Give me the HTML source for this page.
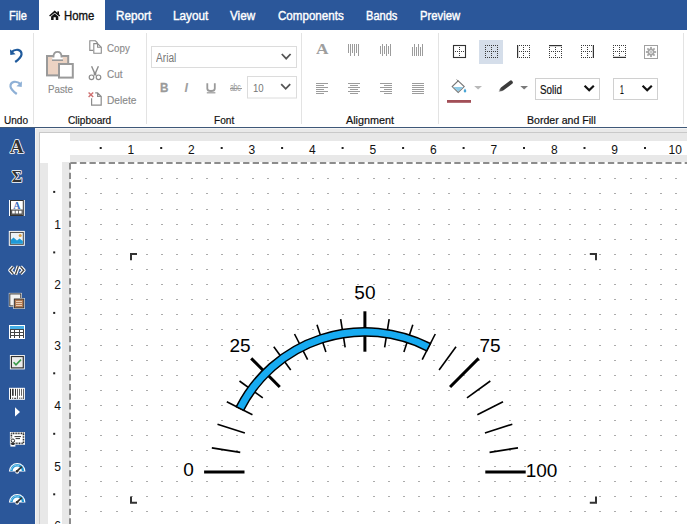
<!DOCTYPE html><html><head><meta charset="utf-8"><style>
*{margin:0;padding:0;box-sizing:border-box}
html,body{width:687px;height:524px;overflow:hidden;background:#fff;font-family:"Liberation Sans",sans-serif}
.a{position:absolute}
.t{position:absolute;white-space:nowrap;line-height:1.149;transform-origin:0 0}
svg{position:absolute;overflow:visible}
</style></head><body><div class="a" style="left:0;top:0;width:687px;height:30px;background:#2b579a"></div>
<div class="a" style="left:38.5px;top:0;width:66px;height:30px;background:#fff"></div>
<div class="t" style="left:9.10px;top:9.09px;font-size:12.5px;color:#fff;transform:scaleX(0.884);-webkit-text-stroke:0.4px #fff">File</div>
<div class="t" style="left:116.10px;top:9.09px;font-size:12.5px;color:#fff;transform:scaleX(0.939);-webkit-text-stroke:0.4px #fff">Report</div>
<div class="t" style="left:172.90px;top:9.09px;font-size:12.5px;color:#fff;transform:scaleX(0.939);-webkit-text-stroke:0.4px #fff">Layout</div>
<div class="t" style="left:229.90px;top:9.09px;font-size:12.5px;color:#fff;transform:scaleX(0.937);-webkit-text-stroke:0.4px #fff">View</div>
<div class="t" style="left:277.70px;top:9.09px;font-size:12.5px;color:#fff;transform:scaleX(0.927);-webkit-text-stroke:0.4px #fff">Components</div>
<div class="t" style="left:365.80px;top:9.09px;font-size:12.5px;color:#fff;transform:scaleX(0.885);-webkit-text-stroke:0.4px #fff">Bands</div>
<div class="t" style="left:419.60px;top:9.09px;font-size:12.5px;color:#fff;transform:scaleX(0.903);-webkit-text-stroke:0.4px #fff">Preview</div>
<div class="t" style="left:63.60px;top:8.89px;font-size:12.5px;color:#111;transform:scaleX(0.908);-webkit-text-stroke:0.35px #111">Home</div>
<svg style="left:0;top:0" width="687" height="30"><path d="M49.6 16 L54.7 11.6 L59.8 16" fill="none" stroke="#111" stroke-width="1.5"/><rect x="57.3" y="11.4" width="1.7" height="3" fill="#111"/><path d="M51.1 16.6 L54.7 13.6 L58.3 16.6 V19.9 H55.8 V17.3 H53.6 V19.9 H51.1 Z" fill="#111"/></svg>
<div class="a" style="left:0;top:127px;width:687px;height:1px;background:#3f5878"></div>
<div class="a" style="left:33px;top:33px;width:1px;height:91px;background:#e3e3e3"></div>
<div class="a" style="left:146px;top:33px;width:1px;height:91px;background:#e3e3e3"></div>
<div class="a" style="left:300.5px;top:33px;width:1px;height:91px;background:#e3e3e3"></div>
<div class="a" style="left:438px;top:33px;width:1px;height:91px;background:#e3e3e3"></div>
<div class="a" style="left:683px;top:33px;width:1px;height:91px;background:#e3e3e3"></div>
<div class="t" style="left:4.20px;top:114.17px;font-size:11px;color:#111;transform:scaleX(0.913);-webkit-text-stroke:0.2px #111">Undo</div>
<div class="t" style="left:68.40px;top:114.17px;font-size:11px;color:#111;transform:scaleX(0.918);-webkit-text-stroke:0.2px #111">Clipboard</div>
<div class="t" style="left:214.00px;top:114.17px;font-size:11px;color:#111;transform:scaleX(0.918);-webkit-text-stroke:0.2px #111">Font</div>
<div class="t" style="left:346.00px;top:114.17px;font-size:11px;color:#111;transform:scaleX(0.981);-webkit-text-stroke:0.2px #111">Alignment</div>
<div class="t" style="left:527.00px;top:114.17px;font-size:11px;color:#111;transform:scaleX(0.961);-webkit-text-stroke:0.2px #111">Border and Fill</div>
<svg style="left:0;top:0" width="687" height="130"><path d="M11.2 52.2 Q14.5 49.3 18 49.8 Q21.8 50.6 21.5 54.6 Q21.2 57.5 15.2 62" fill="none" stroke="#1f5a9c" stroke-width="2.2" stroke-linecap="butt"/><path d="M10 49.3 L10.3 55 L15.6 54.2 Z" fill="#1f5a9c"/><path d="M20.8 84.2 Q17.5 81.3 14 81.8 Q10.2 82.6 10.5 86.6 Q10.8 89.5 16.8 94" fill="none" stroke="#8eb0d6" stroke-width="2.2"/><path d="M22 81.3 L21.7 87 L16.4 86.2 Z" fill="#8eb0d6"/><rect x="47" y="56" width="21.2" height="19.4" fill="#ecd3c3" stroke="#9a9a9a" stroke-width="2"/><path d="M53.5 60 L53.5 56.5 Q53.5 51.8 57.5 51.8 Q61.5 51.8 61.5 56.5 L61.5 60 Z" fill="#fff" stroke="#9a9a9a" stroke-width="1.8"/><rect x="52.2" y="57.5" width="10.6" height="2.6" fill="#fff"/><path d="M52 60.2 H63" stroke="#9a9a9a" stroke-width="1.6"/><rect x="59" y="64" width="13.8" height="13.6" fill="#fff" stroke="#9a9a9a" stroke-width="2"/><path d="M93.2 50.4 H89.8 V40.8 H95.4 L97.6 43" fill="none" stroke="#8c8c8c" stroke-width="1.1"/><path d="M93.8 53.3 V43.6 H97.6 L101.3 47.3 V53.3 Z M97.6 43.6 V47.3 H101.3" fill="#fff" stroke="#8c8c8c" stroke-width="1.1"/><path d="M91.6 66.3 L94.4 72.6 V75.6 M98.4 66.3 L95.6 72.6 V75.6 M93.6 72.9 H96.4" fill="none" stroke="#8c8c8c" stroke-width="1.4"/><circle cx="91.5" cy="77.3" r="2.3" fill="none" stroke="#8c8c8c" stroke-width="1.2"/><circle cx="98.5" cy="77.3" r="2.3" fill="none" stroke="#8c8c8c" stroke-width="1.2"/><path d="M95.2 92.8 H97.6 L101.2 96.4 V105.2 H91.6 V98.2 M97.6 92.8 V96.4 H101.2" fill="none" stroke="#8c8c8c" stroke-width="1.2"/><path d="M88.6 92.4 L93.2 97 M93.2 92.4 L88.6 97" stroke="#cf7070" stroke-width="1.4"/><rect x="151.5" y="46.5" width="145" height="21" fill="#fff" stroke="#dcdcdc"/><path d="M281.8 54 L286.2 58.6 L290.6 54" fill="none" stroke="#555" stroke-width="1.8"/><rect x="247.5" y="76.5" width="49" height="21.5" fill="#fff" stroke="#dcdcdc"/><path d="M281.2 84.2 L285.7 88.8 L290.2 84.2" fill="none" stroke="#555" stroke-width="1.8"/><path d="M207.3 83.2 V88.4 Q207.3 91 211 91 Q214.8 91 214.8 88.4 V83.2" fill="none" stroke="#9a9a9a" stroke-width="1.8"/><rect x="206.8" y="92.2" width="8.6" height="1.2" fill="#9a9a9a"/><path d="M348.5 44.0V53.0M350.5 44.0V56.0M352.5 44.0V53.0M354.5 44.0V56.0M356.5 44.0V53.0M358.5 44.0V56.0" stroke="#9c9c9c" stroke-width="1"/><path d="M380.5 46.0V54.0M382.5 44.0V56.0M384.5 46.0V54.0M386.5 44.0V56.0M388.5 46.0V54.0M390.5 44.0V56.0" stroke="#9c9c9c" stroke-width="1"/><path d="M412.5 47.0V56.0M414.5 44.0V56.0M416.5 47.0V56.0M418.5 44.0V56.0M420.5 47.0V56.0M422.5 44.0V56.0" stroke="#9c9c9c" stroke-width="1"/><path d="M316.0 83.5H328.0M316.0 85.5H324.0M316.0 87.5H328.0M316.0 89.5H324.0M316.0 91.5H328.0M316.0 93.5H324.0" stroke="#9c9c9c" stroke-width="1"/><path d="M348.0 83.5H360.0M350.0 85.5H358.0M348.0 87.5H360.0M350.0 89.5H358.0M348.0 91.5H360.0M350.0 93.5H358.0" stroke="#9c9c9c" stroke-width="1"/><path d="M380.0 83.5H392.0M384.0 85.5H392.0M380.0 87.5H392.0M384.0 89.5H392.0M380.0 91.5H392.0M384.0 93.5H392.0" stroke="#9c9c9c" stroke-width="1"/><path d="M412.0 83.5H424.0M412.0 85.5H424.0M412.0 87.5H424.0M412.0 89.5H424.0M412.0 91.5H424.0M412.0 93.5H424.0" stroke="#9c9c9c" stroke-width="1"/><rect x="479" y="40" width="24" height="24" fill="#d5deea"/><rect x="453.5" y="45.5" width="12" height="12" fill="none" stroke="#333" stroke-width="1.1"/><path d="M455 51.5h1M457 51.5h1M459 47.5h1M459 49.5h1M459 51.5h1M459 53.5h1M459 55.5h1M461 51.5h1M463 51.5h1" stroke="#3a3a3a" stroke-width="1"/><path d="M485 45.5h1M485 47.5h1M485 49.5h1M485 51.5h1M485 53.5h1M485 55.5h1M485 57.5h1M487 45.5h1M487 51.5h1M487 57.5h1M489 45.5h1M489 51.5h1M489 57.5h1M491 45.5h1M491 47.5h1M491 49.5h1M491 51.5h1M491 53.5h1M491 55.5h1M491 57.5h1M493 45.5h1M493 51.5h1M493 57.5h1M495 45.5h1M495 51.5h1M495 57.5h1M497 45.5h1M497 47.5h1M497 49.5h1M497 51.5h1M497 53.5h1M497 55.5h1M497 57.5h1" stroke="#3a3a3a" stroke-width="1"/><rect x="517" y="45" width="1.2" height="13" fill="#333"/><path d="M519 45.5h1M519 51.5h1M519 57.5h1M521 45.5h1M521 51.5h1M521 57.5h1M523 45.5h1M523 47.5h1M523 49.5h1M523 51.5h1M523 53.5h1M523 55.5h1M523 57.5h1M525 45.5h1M525 51.5h1M525 57.5h1M527 45.5h1M527 51.5h1M527 57.5h1M529 45.5h1M529 47.5h1M529 49.5h1M529 51.5h1M529 53.5h1M529 55.5h1M529 57.5h1" stroke="#3a3a3a" stroke-width="1"/><rect x="549" y="45" width="13" height="1.2" fill="#333"/><path d="M549 47.5h1M549 49.5h1M549 51.5h1M549 53.5h1M549 55.5h1M549 57.5h1M551 51.5h1M551 57.5h1M553 51.5h1M553 57.5h1M555 47.5h1M555 49.5h1M555 51.5h1M555 53.5h1M555 55.5h1M555 57.5h1M557 51.5h1M557 57.5h1M559 51.5h1M559 57.5h1M561 47.5h1M561 49.5h1M561 51.5h1M561 53.5h1M561 55.5h1M561 57.5h1" stroke="#3a3a3a" stroke-width="1"/><rect x="592.8" y="45" width="1.2" height="13" fill="#333"/><path d="M581 45.5h1M581 47.5h1M581 49.5h1M581 51.5h1M581 53.5h1M581 55.5h1M581 57.5h1M583 45.5h1M583 51.5h1M583 57.5h1M585 45.5h1M585 51.5h1M585 57.5h1M587 45.5h1M587 47.5h1M587 49.5h1M587 51.5h1M587 53.5h1M587 55.5h1M587 57.5h1M589 45.5h1M589 51.5h1M589 57.5h1M591 45.5h1M591 51.5h1M591 57.5h1" stroke="#3a3a3a" stroke-width="1"/><rect x="613" y="56.8" width="13" height="1.2" fill="#333"/><path d="M613 45.5h1M613 47.5h1M613 49.5h1M613 51.5h1M613 53.5h1M613 55.5h1M615 45.5h1M615 51.5h1M617 45.5h1M617 51.5h1M619 45.5h1M619 47.5h1M619 49.5h1M619 51.5h1M619 53.5h1M619 55.5h1M621 45.5h1M621 51.5h1M623 45.5h1M623 51.5h1M625 45.5h1M625 47.5h1M625 49.5h1M625 51.5h1M625 53.5h1M625 55.5h1" stroke="#3a3a3a" stroke-width="1"/><rect x="644.5" y="45.5" width="13" height="13" fill="#fff" stroke="#a0a0a0" stroke-width="1"/><rect x="650.1" y="46.9" width="1.8" height="2.4" fill="#a6a6a6" transform="rotate(0 651 52)"/><rect x="650.1" y="46.9" width="1.8" height="2.4" fill="#a6a6a6" transform="rotate(45 651 52)"/><rect x="650.1" y="46.9" width="1.8" height="2.4" fill="#a6a6a6" transform="rotate(90 651 52)"/><rect x="650.1" y="46.9" width="1.8" height="2.4" fill="#a6a6a6" transform="rotate(135 651 52)"/><rect x="650.1" y="46.9" width="1.8" height="2.4" fill="#a6a6a6" transform="rotate(180 651 52)"/><rect x="650.1" y="46.9" width="1.8" height="2.4" fill="#a6a6a6" transform="rotate(225 651 52)"/><rect x="650.1" y="46.9" width="1.8" height="2.4" fill="#a6a6a6" transform="rotate(270 651 52)"/><rect x="650.1" y="46.9" width="1.8" height="2.4" fill="#a6a6a6" transform="rotate(315 651 52)"/><circle cx="651" cy="52" r="2.6" fill="none" stroke="#a6a6a6" stroke-width="1.6"/><rect x="650.2" y="51.2" width="1.6" height="1.6" fill="#a6a6a6"/><path d="M458.2 80.8 L464.2 86.6 L458.2 92.4 L452.2 86.6 Z" fill="#fff" stroke="#777" stroke-width="1.1"/><path d="M453.2 86.9 L463.2 86.9 L458.2 91.6 Z" fill="#8fcbe6"/><path d="M465 88.4 Q466.6 90.4 466.3 91.3 Q465.9 92.5 465 92.5 Q464.1 92.5 463.7 91.3 Q463.4 90.4 465 88.4Z" fill="#49a6d6"/><path d="M456.6 79.6 L458.6 81.4" stroke="#777" stroke-width="1"/><rect x="447" y="100" width="24" height="2.8" fill="#a24f57"/><path d="M474.2 86 H482 L478.1 89.6 Z" fill="#b9b9b9"/><g transform="translate(498.6 91.6) rotate(-37)"><rect x="3.2" y="-1.9" width="14" height="3.8" rx="1.6" fill="#3c3c3c"/><path d="M0.2 0 L3.6 -1.9 L3.6 1.9 Z" fill="#555"/><path d="M0.2 0 L1.6 -0.8 L1.6 0.8 Z" fill="#ccc"/></g><path d="M520.3 86 H528 L524.15 89.6 Z" fill="#7a7a7a"/><rect x="535.5" y="78.5" width="64" height="21" fill="#fff" stroke="#d0d0d0"/><path d="M584.6 85.8 L589.2 90.2 L593.8 85.8" fill="none" stroke="#111" stroke-width="2.2"/><rect x="613.5" y="78.5" width="44" height="21" fill="#fff" stroke="#d0d0d0"/><path d="M642.6 85.8 L647.2 90.2 L651.8 85.8" fill="none" stroke="#111" stroke-width="2.2"/></svg>
<div class="t" style="left:48.00px;top:82.87px;font-size:11px;color:#8a8a8a;transform:scaleX(0.888);-webkit-text-stroke:0.15px #8a8a8a">Paste</div>
<div class="t" style="left:107.20px;top:42.17px;font-size:11px;color:#8a8a8a;transform:scaleX(0.890);-webkit-text-stroke:0.15px #8a8a8a">Copy</div>
<div class="t" style="left:107.00px;top:67.87px;font-size:11px;color:#8a8a8a;transform:scaleX(0.909);-webkit-text-stroke:0.15px #8a8a8a">Cut</div>
<div class="t" style="left:107.20px;top:93.67px;font-size:11px;color:#8a8a8a;transform:scaleX(0.925);-webkit-text-stroke:0.15px #8a8a8a">Delete</div>
<div class="t" style="left:156.20px;top:52.15px;font-size:12px;color:#777;transform:scaleX(0.846);">Arial</div>
<div class="t" style="left:252.70px;top:82.01px;font-size:11.5px;color:#777;transform:scaleX(0.838);">10</div>
<div class="t" style="left:540.20px;top:83.29px;font-size:12.5px;color:#111;transform:scaleX(0.786);-webkit-text-stroke:0.2px #111">Solid</div>
<div class="t" style="left:619.60px;top:83.75px;font-size:12px;color:#111;transform:scaleX(0.565);-webkit-text-stroke:0.2px #111">1</div>
<div class="t" style="left:160.00px;top:80.83px;font-size:13px;color:#9a9a9a;transform:scaleX(0.896);font-weight:bold;-webkit-text-stroke:0.3px #9a9a9a">B</div>
<div class="t" style="left:184.50px;top:80.69px;font-size:12.5px;color:#a0a0a0;font-style:italic;font-weight:bold">I</div>
<div class="t" style="left:229.70px;top:81.59px;font-size:10px;color:#9a9a9a;transform:scaleX(0.714);letter-spacing:-0.5px">abc</div>
<div class="a" style="left:229.5px;top:87.6px;width:12px;height:1px;background:#9a9a9a"></div>
<div class="t" style="left:316.30px;top:41.05px;font-size:14.5px;color:#9e9e9e;transform:scaleX(1.194);font-family:'Liberation Serif';font-weight:bold">A</div>
<div class="a" style="left:35px;top:128px;width:652px;height:396px;background:#e9e9e9"></div>
<div class="a" style="left:35px;top:128px;width:652px;height:1px;background:#f4f4f4"></div>
<div class="a" style="left:35px;top:128px;width:1px;height:396px;background:#f4f4f4"></div>
<div class="a" style="left:39px;top:132px;width:648px;height:392px;background:#c9c9c9"></div>
<div class="a" style="left:40px;top:133px;width:647px;height:391px;background:#fff"></div>
<div class="a" style="left:70px;top:133px;width:617px;height:8px;background:#e8e8e8"></div>
<div class="a" style="left:70px;top:155px;width:617px;height:7px;background:#e8e8e8"></div>
<div class="a" style="left:40px;top:163px;width:8px;height:361px;background:#e8e8e8"></div>
<div class="a" style="left:62px;top:162px;width:7.5px;height:362px;background:#e8e8e8"></div>
<div class="t" style="left:127.61px;top:144.15px;font-size:12px;color:#111;">1</div>
<div class="t" style="left:188.08px;top:144.15px;font-size:12px;color:#111;">2</div>
<div class="t" style="left:248.55px;top:144.15px;font-size:12px;color:#111;">3</div>
<div class="t" style="left:309.02px;top:144.15px;font-size:12px;color:#111;">4</div>
<div class="t" style="left:369.49px;top:144.15px;font-size:12px;color:#111;">5</div>
<div class="t" style="left:429.96px;top:144.15px;font-size:12px;color:#111;">6</div>
<div class="t" style="left:490.43px;top:144.15px;font-size:12px;color:#111;">7</div>
<div class="t" style="left:550.90px;top:144.15px;font-size:12px;color:#111;">8</div>
<div class="t" style="left:611.37px;top:144.15px;font-size:12px;color:#111;">9</div>
<div class="t" style="left:668.54px;top:144.15px;font-size:12px;color:#111;">10</div>
<div class="t" style="left:54.14px;top:218.82px;font-size:12px;color:#111;">1</div>
<div class="t" style="left:54.14px;top:279.29px;font-size:12px;color:#111;">2</div>
<div class="t" style="left:54.14px;top:339.76px;font-size:12px;color:#111;">3</div>
<div class="t" style="left:54.14px;top:400.23px;font-size:12px;color:#111;">4</div>
<div class="t" style="left:54.14px;top:460.70px;font-size:12px;color:#111;">5</div>
<div class="t" style="left:54.20px;top:519.95px;font-size:12px;color:#111;">6</div>
<svg style="left:0;top:0" width="687" height="524"><rect x="99.7" y="147" width="2" height="2" fill="#222"/><rect x="160.2" y="147" width="2" height="2" fill="#222"/><rect x="220.7" y="147" width="2" height="2" fill="#222"/><rect x="281.1" y="147" width="2" height="2" fill="#222"/><rect x="341.6" y="147" width="2" height="2" fill="#222"/><rect x="402.1" y="147" width="2" height="2" fill="#222"/><rect x="462.6" y="147" width="2" height="2" fill="#222"/><rect x="523.0" y="147" width="2" height="2" fill="#222"/><rect x="583.5" y="147" width="2" height="2" fill="#222"/><rect x="644.0" y="147" width="2" height="2" fill="#222"/><rect x="704.4" y="147" width="2" height="2" fill="#222"/><rect x="53.2" y="190.9" width="2" height="2" fill="#222"/><rect x="53.2" y="251.4" width="2" height="2" fill="#222"/><rect x="53.2" y="311.9" width="2" height="2" fill="#222"/><rect x="53.2" y="372.3" width="2" height="2" fill="#222"/><rect x="53.2" y="432.8" width="2" height="2" fill="#222"/><rect x="53.2" y="493.3" width="2" height="2" fill="#222"/><path d="M85 178.5h2M85 193.5h2M85 209.5h2M85 224.5h2M85 239.5h2M85 254.5h2M85 269.5h2M85 284.5h2M85 299.5h2M85 314.5h2M85 329.5h2M85 345.5h2M85 360.5h2M85 375.5h2M85 390.5h2M85 405.5h2M85 420.5h2M85 435.5h2M85 450.5h2M85 466.5h2M85 481.5h2M85 496.5h2M85 511.5h2M100 178.5h2M100 193.5h2M100 209.5h2M100 224.5h2M100 239.5h2M100 254.5h2M100 269.5h2M100 284.5h2M100 299.5h2M100 314.5h2M100 329.5h2M100 345.5h2M100 360.5h2M100 375.5h2M100 390.5h2M100 405.5h2M100 420.5h2M100 435.5h2M100 450.5h2M100 466.5h2M100 481.5h2M100 496.5h2M100 511.5h2M116 178.5h2M116 193.5h2M116 209.5h2M116 224.5h2M116 239.5h2M116 254.5h2M116 269.5h2M116 284.5h2M116 299.5h2M116 314.5h2M116 329.5h2M116 345.5h2M116 360.5h2M116 375.5h2M116 390.5h2M116 405.5h2M116 420.5h2M116 435.5h2M116 450.5h2M116 466.5h2M116 481.5h2M116 496.5h2M116 511.5h2M131 178.5h2M131 193.5h2M131 209.5h2M131 224.5h2M131 239.5h2M131 254.5h2M131 269.5h2M131 284.5h2M131 299.5h2M131 314.5h2M131 329.5h2M131 345.5h2M131 360.5h2M131 375.5h2M131 390.5h2M131 405.5h2M131 420.5h2M131 435.5h2M131 450.5h2M131 466.5h2M131 481.5h2M131 496.5h2M131 511.5h2M146 178.5h2M146 193.5h2M146 209.5h2M146 224.5h2M146 239.5h2M146 254.5h2M146 269.5h2M146 284.5h2M146 299.5h2M146 314.5h2M146 329.5h2M146 345.5h2M146 360.5h2M146 375.5h2M146 390.5h2M146 405.5h2M146 420.5h2M146 435.5h2M146 450.5h2M146 466.5h2M146 481.5h2M146 496.5h2M146 511.5h2M161 178.5h2M161 193.5h2M161 209.5h2M161 224.5h2M161 239.5h2M161 254.5h2M161 269.5h2M161 284.5h2M161 299.5h2M161 314.5h2M161 329.5h2M161 345.5h2M161 360.5h2M161 375.5h2M161 390.5h2M161 405.5h2M161 420.5h2M161 435.5h2M161 450.5h2M161 466.5h2M161 481.5h2M161 496.5h2M161 511.5h2M176 178.5h2M176 193.5h2M176 209.5h2M176 224.5h2M176 239.5h2M176 254.5h2M176 269.5h2M176 284.5h2M176 299.5h2M176 314.5h2M176 329.5h2M176 345.5h2M176 360.5h2M176 375.5h2M176 390.5h2M176 405.5h2M176 420.5h2M176 435.5h2M176 450.5h2M176 466.5h2M176 481.5h2M176 496.5h2M176 511.5h2M191 178.5h2M191 193.5h2M191 209.5h2M191 224.5h2M191 239.5h2M191 254.5h2M191 269.5h2M191 284.5h2M191 299.5h2M191 314.5h2M191 329.5h2M191 345.5h2M191 360.5h2M191 375.5h2M191 390.5h2M191 405.5h2M191 420.5h2M191 435.5h2M191 450.5h2M191 466.5h2M191 481.5h2M191 496.5h2M191 511.5h2M206 178.5h2M206 193.5h2M206 209.5h2M206 224.5h2M206 239.5h2M206 254.5h2M206 269.5h2M206 284.5h2M206 299.5h2M206 314.5h2M206 329.5h2M206 345.5h2M206 360.5h2M206 375.5h2M206 390.5h2M206 405.5h2M206 420.5h2M206 435.5h2M206 450.5h2M206 466.5h2M206 481.5h2M206 496.5h2M206 511.5h2M221 178.5h2M221 193.5h2M221 209.5h2M221 224.5h2M221 239.5h2M221 254.5h2M221 269.5h2M221 284.5h2M221 299.5h2M221 314.5h2M221 329.5h2M221 345.5h2M221 360.5h2M221 375.5h2M221 390.5h2M221 405.5h2M221 420.5h2M221 435.5h2M221 450.5h2M221 466.5h2M221 481.5h2M221 496.5h2M221 511.5h2M236 178.5h2M236 193.5h2M236 209.5h2M236 224.5h2M236 239.5h2M236 254.5h2M236 269.5h2M236 284.5h2M236 299.5h2M236 314.5h2M236 329.5h2M236 345.5h2M236 360.5h2M236 375.5h2M236 390.5h2M236 405.5h2M236 420.5h2M236 435.5h2M236 450.5h2M236 466.5h2M236 481.5h2M236 496.5h2M236 511.5h2M252 178.5h2M252 193.5h2M252 209.5h2M252 224.5h2M252 239.5h2M252 254.5h2M252 269.5h2M252 284.5h2M252 299.5h2M252 314.5h2M252 329.5h2M252 345.5h2M252 360.5h2M252 375.5h2M252 390.5h2M252 405.5h2M252 420.5h2M252 435.5h2M252 450.5h2M252 466.5h2M252 481.5h2M252 496.5h2M252 511.5h2M267 178.5h2M267 193.5h2M267 209.5h2M267 224.5h2M267 239.5h2M267 254.5h2M267 269.5h2M267 284.5h2M267 299.5h2M267 314.5h2M267 329.5h2M267 345.5h2M267 360.5h2M267 375.5h2M267 390.5h2M267 405.5h2M267 420.5h2M267 435.5h2M267 450.5h2M267 466.5h2M267 481.5h2M267 496.5h2M267 511.5h2M282 178.5h2M282 193.5h2M282 209.5h2M282 224.5h2M282 239.5h2M282 254.5h2M282 269.5h2M282 284.5h2M282 299.5h2M282 314.5h2M282 329.5h2M282 345.5h2M282 360.5h2M282 375.5h2M282 390.5h2M282 405.5h2M282 420.5h2M282 435.5h2M282 450.5h2M282 466.5h2M282 481.5h2M282 496.5h2M282 511.5h2M297 178.5h2M297 193.5h2M297 209.5h2M297 224.5h2M297 239.5h2M297 254.5h2M297 269.5h2M297 284.5h2M297 299.5h2M297 314.5h2M297 329.5h2M297 345.5h2M297 360.5h2M297 375.5h2M297 390.5h2M297 405.5h2M297 420.5h2M297 435.5h2M297 450.5h2M297 466.5h2M297 481.5h2M297 496.5h2M297 511.5h2M312 178.5h2M312 193.5h2M312 209.5h2M312 224.5h2M312 239.5h2M312 254.5h2M312 269.5h2M312 284.5h2M312 299.5h2M312 314.5h2M312 329.5h2M312 345.5h2M312 360.5h2M312 375.5h2M312 390.5h2M312 405.5h2M312 420.5h2M312 435.5h2M312 450.5h2M312 466.5h2M312 481.5h2M312 496.5h2M312 511.5h2M327 178.5h2M327 193.5h2M327 209.5h2M327 224.5h2M327 239.5h2M327 254.5h2M327 269.5h2M327 284.5h2M327 299.5h2M327 314.5h2M327 329.5h2M327 345.5h2M327 360.5h2M327 375.5h2M327 390.5h2M327 405.5h2M327 420.5h2M327 435.5h2M327 450.5h2M327 466.5h2M327 481.5h2M327 496.5h2M327 511.5h2M342 178.5h2M342 193.5h2M342 209.5h2M342 224.5h2M342 239.5h2M342 254.5h2M342 269.5h2M342 284.5h2M342 299.5h2M342 314.5h2M342 329.5h2M342 345.5h2M342 360.5h2M342 375.5h2M342 390.5h2M342 405.5h2M342 420.5h2M342 435.5h2M342 450.5h2M342 466.5h2M342 481.5h2M342 496.5h2M342 511.5h2M357 178.5h2M357 193.5h2M357 209.5h2M357 224.5h2M357 239.5h2M357 254.5h2M357 269.5h2M357 284.5h2M357 299.5h2M357 314.5h2M357 329.5h2M357 345.5h2M357 360.5h2M357 375.5h2M357 390.5h2M357 405.5h2M357 420.5h2M357 435.5h2M357 450.5h2M357 466.5h2M357 481.5h2M357 496.5h2M357 511.5h2M373 178.5h2M373 193.5h2M373 209.5h2M373 224.5h2M373 239.5h2M373 254.5h2M373 269.5h2M373 284.5h2M373 299.5h2M373 314.5h2M373 329.5h2M373 345.5h2M373 360.5h2M373 375.5h2M373 390.5h2M373 405.5h2M373 420.5h2M373 435.5h2M373 450.5h2M373 466.5h2M373 481.5h2M373 496.5h2M373 511.5h2M388 178.5h2M388 193.5h2M388 209.5h2M388 224.5h2M388 239.5h2M388 254.5h2M388 269.5h2M388 284.5h2M388 299.5h2M388 314.5h2M388 329.5h2M388 345.5h2M388 360.5h2M388 375.5h2M388 390.5h2M388 405.5h2M388 420.5h2M388 435.5h2M388 450.5h2M388 466.5h2M388 481.5h2M388 496.5h2M388 511.5h2M403 178.5h2M403 193.5h2M403 209.5h2M403 224.5h2M403 239.5h2M403 254.5h2M403 269.5h2M403 284.5h2M403 299.5h2M403 314.5h2M403 329.5h2M403 345.5h2M403 360.5h2M403 375.5h2M403 390.5h2M403 405.5h2M403 420.5h2M403 435.5h2M403 450.5h2M403 466.5h2M403 481.5h2M403 496.5h2M403 511.5h2M418 178.5h2M418 193.5h2M418 209.5h2M418 224.5h2M418 239.5h2M418 254.5h2M418 269.5h2M418 284.5h2M418 299.5h2M418 314.5h2M418 329.5h2M418 345.5h2M418 360.5h2M418 375.5h2M418 390.5h2M418 405.5h2M418 420.5h2M418 435.5h2M418 450.5h2M418 466.5h2M418 481.5h2M418 496.5h2M418 511.5h2M433 178.5h2M433 193.5h2M433 209.5h2M433 224.5h2M433 239.5h2M433 254.5h2M433 269.5h2M433 284.5h2M433 299.5h2M433 314.5h2M433 329.5h2M433 345.5h2M433 360.5h2M433 375.5h2M433 390.5h2M433 405.5h2M433 420.5h2M433 435.5h2M433 450.5h2M433 466.5h2M433 481.5h2M433 496.5h2M433 511.5h2M448 178.5h2M448 193.5h2M448 209.5h2M448 224.5h2M448 239.5h2M448 254.5h2M448 269.5h2M448 284.5h2M448 299.5h2M448 314.5h2M448 329.5h2M448 345.5h2M448 360.5h2M448 375.5h2M448 390.5h2M448 405.5h2M448 420.5h2M448 435.5h2M448 450.5h2M448 466.5h2M448 481.5h2M448 496.5h2M448 511.5h2M463 178.5h2M463 193.5h2M463 209.5h2M463 224.5h2M463 239.5h2M463 254.5h2M463 269.5h2M463 284.5h2M463 299.5h2M463 314.5h2M463 329.5h2M463 345.5h2M463 360.5h2M463 375.5h2M463 390.5h2M463 405.5h2M463 420.5h2M463 435.5h2M463 450.5h2M463 466.5h2M463 481.5h2M463 496.5h2M463 511.5h2M478 178.5h2M478 193.5h2M478 209.5h2M478 224.5h2M478 239.5h2M478 254.5h2M478 269.5h2M478 284.5h2M478 299.5h2M478 314.5h2M478 329.5h2M478 345.5h2M478 360.5h2M478 375.5h2M478 390.5h2M478 405.5h2M478 420.5h2M478 435.5h2M478 450.5h2M478 466.5h2M478 481.5h2M478 496.5h2M478 511.5h2M494 178.5h2M494 193.5h2M494 209.5h2M494 224.5h2M494 239.5h2M494 254.5h2M494 269.5h2M494 284.5h2M494 299.5h2M494 314.5h2M494 329.5h2M494 345.5h2M494 360.5h2M494 375.5h2M494 390.5h2M494 405.5h2M494 420.5h2M494 435.5h2M494 450.5h2M494 466.5h2M494 481.5h2M494 496.5h2M494 511.5h2M509 178.5h2M509 193.5h2M509 209.5h2M509 224.5h2M509 239.5h2M509 254.5h2M509 269.5h2M509 284.5h2M509 299.5h2M509 314.5h2M509 329.5h2M509 345.5h2M509 360.5h2M509 375.5h2M509 390.5h2M509 405.5h2M509 420.5h2M509 435.5h2M509 450.5h2M509 466.5h2M509 481.5h2M509 496.5h2M509 511.5h2M524 178.5h2M524 193.5h2M524 209.5h2M524 224.5h2M524 239.5h2M524 254.5h2M524 269.5h2M524 284.5h2M524 299.5h2M524 314.5h2M524 329.5h2M524 345.5h2M524 360.5h2M524 375.5h2M524 390.5h2M524 405.5h2M524 420.5h2M524 435.5h2M524 450.5h2M524 466.5h2M524 481.5h2M524 496.5h2M524 511.5h2M539 178.5h2M539 193.5h2M539 209.5h2M539 224.5h2M539 239.5h2M539 254.5h2M539 269.5h2M539 284.5h2M539 299.5h2M539 314.5h2M539 329.5h2M539 345.5h2M539 360.5h2M539 375.5h2M539 390.5h2M539 405.5h2M539 420.5h2M539 435.5h2M539 450.5h2M539 466.5h2M539 481.5h2M539 496.5h2M539 511.5h2M554 178.5h2M554 193.5h2M554 209.5h2M554 224.5h2M554 239.5h2M554 254.5h2M554 269.5h2M554 284.5h2M554 299.5h2M554 314.5h2M554 329.5h2M554 345.5h2M554 360.5h2M554 375.5h2M554 390.5h2M554 405.5h2M554 420.5h2M554 435.5h2M554 450.5h2M554 466.5h2M554 481.5h2M554 496.5h2M554 511.5h2M569 178.5h2M569 193.5h2M569 209.5h2M569 224.5h2M569 239.5h2M569 254.5h2M569 269.5h2M569 284.5h2M569 299.5h2M569 314.5h2M569 329.5h2M569 345.5h2M569 360.5h2M569 375.5h2M569 390.5h2M569 405.5h2M569 420.5h2M569 435.5h2M569 450.5h2M569 466.5h2M569 481.5h2M569 496.5h2M569 511.5h2M584 178.5h2M584 193.5h2M584 209.5h2M584 224.5h2M584 239.5h2M584 254.5h2M584 269.5h2M584 284.5h2M584 299.5h2M584 314.5h2M584 329.5h2M584 345.5h2M584 360.5h2M584 375.5h2M584 390.5h2M584 405.5h2M584 420.5h2M584 435.5h2M584 450.5h2M584 466.5h2M584 481.5h2M584 496.5h2M584 511.5h2M599 178.5h2M599 193.5h2M599 209.5h2M599 224.5h2M599 239.5h2M599 254.5h2M599 269.5h2M599 284.5h2M599 299.5h2M599 314.5h2M599 329.5h2M599 345.5h2M599 360.5h2M599 375.5h2M599 390.5h2M599 405.5h2M599 420.5h2M599 435.5h2M599 450.5h2M599 466.5h2M599 481.5h2M599 496.5h2M599 511.5h2M614 178.5h2M614 193.5h2M614 209.5h2M614 224.5h2M614 239.5h2M614 254.5h2M614 269.5h2M614 284.5h2M614 299.5h2M614 314.5h2M614 329.5h2M614 345.5h2M614 360.5h2M614 375.5h2M614 390.5h2M614 405.5h2M614 420.5h2M614 435.5h2M614 450.5h2M614 466.5h2M614 481.5h2M614 496.5h2M614 511.5h2M630 178.5h2M630 193.5h2M630 209.5h2M630 224.5h2M630 239.5h2M630 254.5h2M630 269.5h2M630 284.5h2M630 299.5h2M630 314.5h2M630 329.5h2M630 345.5h2M630 360.5h2M630 375.5h2M630 390.5h2M630 405.5h2M630 420.5h2M630 435.5h2M630 450.5h2M630 466.5h2M630 481.5h2M630 496.5h2M630 511.5h2M645 178.5h2M645 193.5h2M645 209.5h2M645 224.5h2M645 239.5h2M645 254.5h2M645 269.5h2M645 284.5h2M645 299.5h2M645 314.5h2M645 329.5h2M645 345.5h2M645 360.5h2M645 375.5h2M645 390.5h2M645 405.5h2M645 420.5h2M645 435.5h2M645 450.5h2M645 466.5h2M645 481.5h2M645 496.5h2M645 511.5h2M660 178.5h2M660 193.5h2M660 209.5h2M660 224.5h2M660 239.5h2M660 254.5h2M660 269.5h2M660 284.5h2M660 299.5h2M660 314.5h2M660 329.5h2M660 345.5h2M660 360.5h2M660 375.5h2M660 390.5h2M660 405.5h2M660 420.5h2M660 435.5h2M660 450.5h2M660 466.5h2M660 481.5h2M660 496.5h2M660 511.5h2M675 178.5h2M675 193.5h2M675 209.5h2M675 224.5h2M675 239.5h2M675 254.5h2M675 269.5h2M675 284.5h2M675 299.5h2M675 314.5h2M675 329.5h2M675 345.5h2M675 360.5h2M675 375.5h2M675 390.5h2M675 405.5h2M675 420.5h2M675 435.5h2M675 450.5h2M675 466.5h2M675 481.5h2M675 496.5h2M675 511.5h2" stroke="#ababab" stroke-width="1"/><path d="M69 163 H687" fill="none" stroke="#8c8c8c" stroke-width="2" stroke-dasharray="6.3 3.3" stroke-dashoffset="8.30"/><path d="M70 162 V524" fill="none" stroke="#8c8c8c" stroke-width="2" stroke-dasharray="6.3 3.3" stroke-dashoffset="8.50"/><path d="M131 260.2 V254 H137" fill="none" stroke="#333" stroke-width="2"/><path d="M131 496.4 V502.7 H137" fill="none" stroke="#333" stroke-width="2"/><path d="M596 260.2 V254 H589.8" fill="none" stroke="#333" stroke-width="2"/><path d="M596 496.4 V502.7 H589.8" fill="none" stroke="#333" stroke-width="2"/><path d="M244.50 472.10 L204.10 472.10" stroke="#000" stroke-width="3"/><path d="M240.25 452.36 L211.81 447.85" stroke="#000" stroke-width="1.6"/><path d="M244.88 433.10 L217.49 424.20" stroke="#000" stroke-width="1.6"/><path d="M252.45 414.81 L226.79 401.73" stroke="#000" stroke-width="1.6"/><path d="M262.80 397.92 L239.50 380.99" stroke="#000" stroke-width="1.6"/><path d="M279.76 386.96 L251.20 358.40" stroke="#000" stroke-width="3"/><path d="M290.72 370.00 L273.79 346.70" stroke="#000" stroke-width="1.6"/><path d="M307.61 359.65 L294.53 333.99" stroke="#000" stroke-width="1.6"/><path d="M325.90 352.08 L317.00 324.69" stroke="#000" stroke-width="1.6"/><path d="M345.16 347.45 L340.65 319.01" stroke="#000" stroke-width="1.6"/><path d="M364.90 351.70 L364.90 311.30" stroke="#000" stroke-width="3"/><path d="M384.64 347.45 L389.15 319.01" stroke="#000" stroke-width="1.6"/><path d="M403.90 352.08 L412.80 324.69" stroke="#000" stroke-width="1.6"/><path d="M422.19 359.65 L435.27 333.99" stroke="#000" stroke-width="1.6"/><path d="M439.08 370.00 L456.01 346.70" stroke="#000" stroke-width="1.6"/><path d="M450.04 386.96 L478.60 358.40" stroke="#000" stroke-width="3"/><path d="M467.00 397.92 L490.30 380.99" stroke="#000" stroke-width="1.6"/><path d="M477.35 414.81 L503.01 401.73" stroke="#000" stroke-width="1.6"/><path d="M484.92 433.10 L512.31 424.20" stroke="#000" stroke-width="1.6"/><path d="M489.55 452.36 L517.99 447.85" stroke="#000" stroke-width="1.6"/><path d="M485.30 472.10 L525.70 472.10" stroke="#000" stroke-width="3"/><path d="M236.33 406.59 A144.3 144.3 0 0 1 430.41 343.53 L426.69 350.83 A136.1 136.1 0 0 0 243.63 410.31 Z" fill="#17abf1" stroke="#000" stroke-width="1.5"/></svg>
<div class="t" style="left:183.18px;top:459.40px;font-size:19px;color:#000;">0</div>
<div class="t" style="left:229.56px;top:334.50px;font-size:19px;color:#000;">25</div>
<div class="t" style="left:354.35px;top:282.30px;font-size:19px;color:#000;">50</div>
<div class="t" style="left:479.45px;top:334.70px;font-size:19px;color:#000;">75</div>
<div class="t" style="left:525.63px;top:459.50px;font-size:19px;color:#000;">100</div>
<div class="a" style="left:0;top:128px;width:35px;height:396px;background:#2b579a"></div>
<svg style="left:0;top:0" width="40" height="524"><text x="16.9" y="153" font-family="Liberation Serif" font-weight="bold" font-size="19" text-anchor="middle" fill="#333" stroke="#fff" stroke-width="1.6" paint-order="stroke" stroke-linejoin="round">A</text><text x="16.95" y="182.3" font-family="Liberation Serif" font-weight="bold" font-size="16" text-anchor="middle" fill="#333" stroke="#fff" stroke-width="1.6" paint-order="stroke" stroke-linejoin="round">&#931;</text><rect x="9" y="200" width="15.8" height="16" fill="#fff"/><rect x="10.5" y="200.5" width="12.8" height="15" fill="#fff" stroke="#333" stroke-width="1"/><text x="16.9" y="208.6" font-family="Liberation Serif" font-weight="bold" font-size="10" text-anchor="middle" fill="#3a6fc0">A</text><rect x="11" y="209.5" width="11.8" height="5.5" fill="#555"/><rect x="12.2" y="210.7" width="2.6" height="2.8" fill="#fff"/><rect x="15.6" y="210.7" width="2.6" height="2.8" fill="#fff"/><rect x="19" y="210.7" width="2.6" height="2.8" fill="#fff"/><rect x="8.8" y="230.9" width="16" height="14.9" fill="#fff"/><rect x="10.3" y="232.4" width="13" height="11.9" fill="#eef3f7" stroke="#444" stroke-width="1"/><path d="M10.8 240 L13.5 237.4 L17 240.6 L19.5 238.6 L22.8 241 V243.8 H10.8 Z" fill="#1e9ad8"/><circle cx="20.2" cy="235.6" r="1.5" fill="#e0a040"/><path d="M13.3 266.6 L10 270.2 L13.3 273.8 M20.5 266.6 L23.8 270.2 L20.5 273.8 M18.4 266 L15.4 274.6" fill="none" stroke="#fff" stroke-width="3.6" stroke-linejoin="round"/><path d="M13.3 266.6 L10 270.2 L13.3 273.8 M20.5 266.6 L23.8 270.2 L20.5 273.8 M18.4 266 L15.4 274.6" fill="none" stroke="#444" stroke-width="1.4"/><rect x="8.8" y="292.9" width="13" height="14" fill="#fff"/><rect x="9.8" y="293.9" width="11" height="12" fill="#f2f2f2" stroke="#333" stroke-width="1"/><rect x="13.3" y="298" width="11.5" height="10.9" fill="#fff"/><rect x="14.3" y="299" width="9.5" height="8.9" fill="#b27a52" stroke="#333" stroke-width="1"/><path d="M16 301.5 H22 M16 303.5 H22 M16 305.5 H22" stroke="#f0d8c0" stroke-width="0.9"/><rect x="9" y="325" width="16" height="14" fill="#fff"/><rect x="10" y="326" width="14" height="12" fill="#444"/><rect x="10" y="326" width="14" height="3" fill="#45aee6"/><rect x="11" y="330" width="3" height="2" fill="#fff"/><rect x="15" y="330" width="4" height="2" fill="#fff"/><rect x="20" y="330" width="3" height="2" fill="#fff"/><rect x="11" y="333" width="3" height="2" fill="#fff"/><rect x="15" y="333" width="4" height="2" fill="#fff"/><rect x="20" y="333" width="3" height="2" fill="#fff"/><rect x="11" y="336" width="3" height="2" fill="#fff"/><rect x="15" y="336" width="4" height="2" fill="#fff"/><rect x="20" y="336" width="3" height="2" fill="#fff"/><rect x="9.9" y="355" width="14.9" height="14.4" fill="#fff"/><rect x="11.4" y="356.5" width="11.9" height="11.4" fill="#ececec" stroke="#333" stroke-width="1.2"/><path d="M13.6 362.2 L16 364.8 L21 359.6" fill="none" stroke="#3a9a48" stroke-width="1.6"/><rect x="9.05" y="387.8" width="15.85" height="12" fill="#fff"/><rect x="10" y="388.8" width="1.0" height="10.2" fill="#222"/><rect x="12.1" y="388.8" width="1.5" height="7.0" fill="#222"/><rect x="15" y="388.8" width="0.9" height="7.0" fill="#222"/><rect x="17.1" y="388.8" width="0.7" height="10.2" fill="#222"/><rect x="19.2" y="388.8" width="0.7" height="7.0" fill="#222"/><rect x="21.3" y="388.8" width="0.7" height="7.0" fill="#222"/><rect x="23.2" y="388.8" width="0.7" height="10.2" fill="#222"/><rect x="12.2" y="397.6" width="1" height="1.2" fill="#222"/><rect x="14.2" y="397.8" width="2" height="1" fill="#222"/><rect x="19.3" y="397.6" width="1" height="1.2" fill="#222"/><rect x="21.3" y="397.6" width="1" height="1.2" fill="#222"/><path d="M15 407.2 L20 411.9 L15 416.6 Z" fill="#fff"/><rect x="9.9" y="432" width="15.1" height="12.8" fill="#fff"/><rect x="11.4" y="433.4" width="12.1" height="10" fill="none" stroke="#333" stroke-width="1.6" stroke-dasharray="1 0.6"/><path d="M14.5 436.6 H21 M15.6 438.6 H20" stroke="#333" stroke-width="1"/><circle cx="12.9" cy="440.7" r="2.6" fill="#fff"/><circle cx="12.9" cy="440.7" r="1.7" fill="#fff" stroke="#333" stroke-width="1"/><rect x="11.6" y="442.6" width="2.6" height="2.4" fill="#333"/><rect x="10.4" y="445" width="5" height="1.6" fill="#fff"/><path d="M8.899999999999999 471.4 A8.3 8.3 0 0 1 25.5 471.4 Z" fill="#fff"/><path d="M10.2 471.0 A7 7 0 0 1 24.2 471.0 L21.799999999999997 471.0 A4.6 4.6 0 0 0 12.6 471.0 Z" fill="#1f95d2"/><path d="M11.0 470.2 A6.2 6.2 0 0 1 19.2 465.4" fill="none" stroke="#8fd0f0" stroke-width="0.9"/><circle cx="17.2" cy="471.7" r="2" fill="#fff"/><path d="M16.8 471.4 L21.799999999999997 466.59999999999997" stroke="#333" stroke-width="1.8"/><circle cx="17.0" cy="471.29999999999995" r="1.3" fill="#333"/><path d="M8.899999999999999 502.4 A8.3 8.3 0 0 1 25.5 502.4 Z" fill="#fff"/><path d="M10.2 502.0 A7 7 0 0 1 24.2 502.0 L21.799999999999997 502.0 A4.6 4.6 0 0 0 12.6 502.0 Z" fill="#1f95d2"/><path d="M11.0 501.2 A6.2 6.2 0 0 1 19.2 496.4" fill="none" stroke="#8fd0f0" stroke-width="0.9"/><circle cx="17.2" cy="502.7" r="2" fill="#fff"/><path d="M16.8 502.4 L21.799999999999997 497.59999999999997" stroke="#333" stroke-width="1.8"/><circle cx="17.0" cy="502.29999999999995" r="1.3" fill="#333"/></svg></body></html>
